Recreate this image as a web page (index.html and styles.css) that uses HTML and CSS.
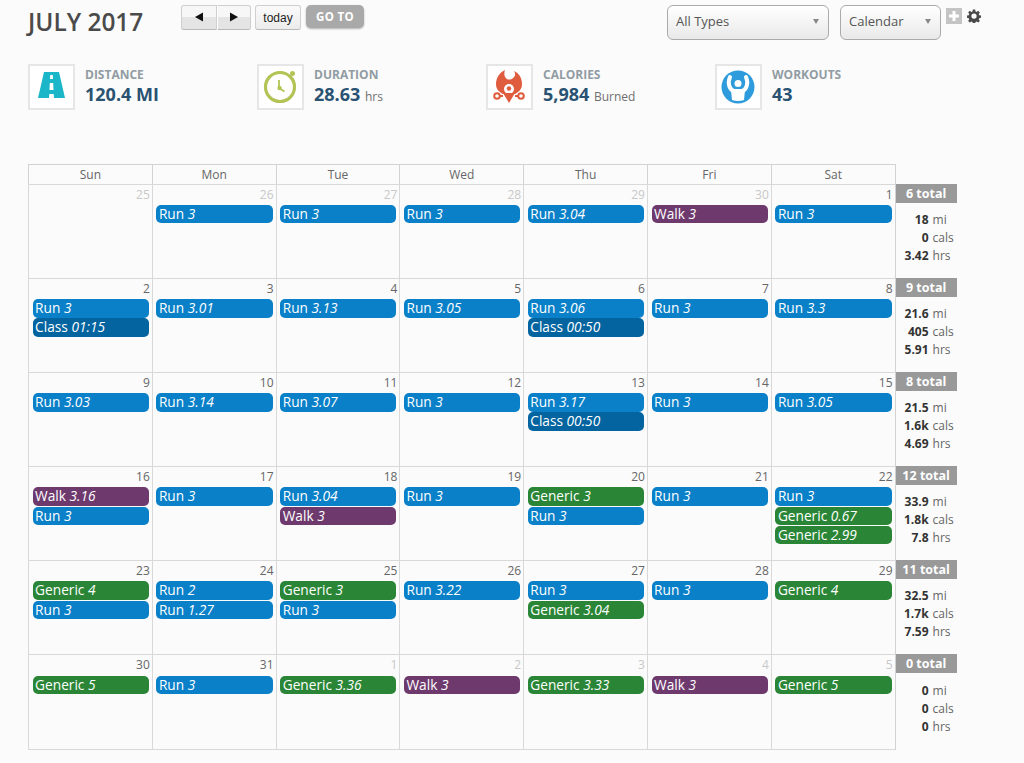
FILE: index.html
```html
<!DOCTYPE html>
<html lang="en">
<head>
<meta charset="utf-8">
<title>July 2017</title>
<link rel="stylesheet" href="styles.css">
</head>
<body>
<header class="topbar">
  <h1 class="month">JULY 2017</h1>
  <div class="nav">
    <button class="fc-btn fc-prev"><svg width="10" height="10" viewBox="0 0 10 10"><polygon points="1,5 9,0.5 9,9.5"/></svg></button>
    <button class="fc-btn fc-next"><svg width="10" height="10" viewBox="0 0 10 10"><polygon points="9,5 1,0.5 1,9.5"/></svg></button>
    <button class="fc-btn fc-today">today</button>
    <button class="goto">GO TO</button>
  </div>
  <div class="filters">
    <div class="select select-types"><span>All Types</span><i class="caret"></i></div>
    <div class="select select-view"><span>Calendar</span><i class="caret"></i></div>
    <div class="plus"><svg width="16" height="16" viewBox="0 0 16 16"><path d="M6.500 3h3v3.500H13v3H9.500V13h-3V9.500H3v-3h3.500z" fill="#fff"/></svg></div>
    <svg class="gear" width="14" height="14" viewBox="0 0 24 24"><path fill="#4a4a4a" fill-rule="evenodd" d="M10 1h4l.6 3.200 1.900.8 2.700-1.800 2.800 2.800-1.800 2.700.8 1.900 3 .6v4l-3 .6-.8 1.900 1.800 2.700-2.800 2.800-2.700-1.800-1.900.8-.6 3.200h-4l-.6-3.200-1.900-.8-2.700 1.800-2.800-2.800 1.800-2.700-.8-1.900-3-.6v-4l3-.6.8-1.900-1.800-2.700 2.800-2.800 2.700 1.800 1.900-.8zM12 7.500a4.500 4.500 0 1 0 0 9 4.500 4.500 0 0 0 0-9z"/></svg>
  </div>
</header>

<section class="stats">
  <div class="stat">
    <div class="stat-icon"><svg width="43" height="42" viewBox="0 0 43 42"><path fill="#1cb6c9" d="M14 6h15l6 26H8z"/><path fill="#fff" d="M20.200 9h2.600l.2 4h-3zM19.800 17h3.400l.3 7h-4zM19.300 28h4.400l.3 4h-5z"/></svg></div>
    <div><div class="stat-label">DISTANCE</div><div class="stat-value">120.4 MI</div></div>
  </div>
  <div class="stat">
    <div class="stat-icon"><svg width="43" height="42" viewBox="0 0 43 42"><circle cx="21" cy="21" r="14.500" fill="#fff" stroke="#b3c355" stroke-width="3.200"/><circle cx="33.500" cy="7.500" r="2.500" fill="#b3c355"/><path d="M20 14v8l5.500 3.500" fill="none" stroke="#b3c355" stroke-width="1.800"/><circle cx="20.500" cy="22" r="2.200" fill="#b3c355"/></svg></div>
    <div><div class="stat-label">DURATION</div><div class="stat-value">28.63 <small>hrs</small></div></div>
  </div>
  <div class="stat">
    <div class="stat-icon"><svg width="43" height="42" viewBox="0 0 43 42"><path fill="#e05c3e" d="M17 4C11 7 8 12 8 18c0 5 3 8 7 10h12c4-2 7-5 7-10 0-6-3-11-8-13 2 3 1 6-1 7-2 2-6 2-7 0-2-2-2-5-1-8z"/><circle cx="21" cy="23" r="5" fill="#fff"/><circle cx="21" cy="22.500" r="2.200" fill="#e05c3e"/><path fill="#e05c3e" d="M15 27h12l-6 10z"/><circle cx="9" cy="30" r="2.800" fill="#fff" stroke="#e05c3e" stroke-width="2"/><circle cx="33" cy="30" r="2.800" fill="#fff" stroke="#e05c3e" stroke-width="2"/><path d="M12 30h3M27 30h3" stroke="#e05c3e" stroke-width="2"/></svg></div>
    <div><div class="stat-label">CALORIES</div><div class="stat-value">5,984 <small>Burned</small></div></div>
  </div>
  <div class="stat">
    <div class="stat-icon"><svg width="43" height="42" viewBox="0 0 43 42"><circle cx="21" cy="21" r="16.500" fill="#2e9cdc"/><path fill="none" stroke="#fff" stroke-width="4" stroke-linecap="round" d="M13 11c-3 7 0 13 4 14h8c4-1 7-7 4-14"/><circle cx="21" cy="17.500" r="3.500" fill="#fff"/><path fill="#fff" d="M14 24h14l-1 10q-6 2-12 0z"/></svg></div>
    <div><div class="stat-label">WORKOUTS</div><div class="stat-value">43</div></div>
  </div>
</section>

<main class="cal">
  <div class="dow">Sun</div><div class="dow">Mon</div><div class="dow">Tue</div><div class="dow">Wed</div><div class="dow">Thu</div><div class="dow">Fri</div><div class="dow">Sat</div><div class="side-head"></div>

  <div class="day"><div class="num off">25</div></div>
  <div class="day"><div class="num off">26</div><div class="ev run">Run <em>3</em></div></div>
  <div class="day"><div class="num off">27</div><div class="ev run">Run <em>3</em></div></div>
  <div class="day"><div class="num off">28</div><div class="ev run">Run <em>3</em></div></div>
  <div class="day"><div class="num off">29</div><div class="ev run">Run <em>3.04</em></div></div>
  <div class="day"><div class="num off">30</div><div class="ev walk">Walk <em>3</em></div></div>
  <div class="day"><div class="num">1</div><div class="ev run">Run <em>3</em></div></div>
  <div class="side"><div class="total">6 total</div><dl class="sums"><dt>18</dt><dd>mi</dd><dt>0</dt><dd>cals</dd><dt>3.42</dt><dd>hrs</dd></dl></div>

  <div class="day"><div class="num">2</div><div class="ev run">Run <em>3</em></div><div class="ev class">Class <em>01:15</em></div></div>
  <div class="day"><div class="num">3</div><div class="ev run">Run <em>3.01</em></div></div>
  <div class="day"><div class="num">4</div><div class="ev run">Run <em>3.13</em></div></div>
  <div class="day"><div class="num">5</div><div class="ev run">Run <em>3.05</em></div></div>
  <div class="day"><div class="num">6</div><div class="ev run">Run <em>3.06</em></div><div class="ev class">Class <em>00:50</em></div></div>
  <div class="day"><div class="num">7</div><div class="ev run">Run <em>3</em></div></div>
  <div class="day"><div class="num">8</div><div class="ev run">Run <em>3.3</em></div></div>
  <div class="side"><div class="total">9 total</div><dl class="sums"><dt>21.6</dt><dd>mi</dd><dt>405</dt><dd>cals</dd><dt>5.91</dt><dd>hrs</dd></dl></div>

  <div class="day"><div class="num">9</div><div class="ev run">Run <em>3.03</em></div></div>
  <div class="day"><div class="num">10</div><div class="ev run">Run <em>3.14</em></div></div>
  <div class="day"><div class="num">11</div><div class="ev run">Run <em>3.07</em></div></div>
  <div class="day"><div class="num">12</div><div class="ev run">Run <em>3</em></div></div>
  <div class="day"><div class="num">13</div><div class="ev run">Run <em>3.17</em></div><div class="ev class">Class <em>00:50</em></div></div>
  <div class="day"><div class="num">14</div><div class="ev run">Run <em>3</em></div></div>
  <div class="day"><div class="num">15</div><div class="ev run">Run <em>3.05</em></div></div>
  <div class="side"><div class="total">8 total</div><dl class="sums"><dt>21.5</dt><dd>mi</dd><dt>1.6k</dt><dd>cals</dd><dt>4.69</dt><dd>hrs</dd></dl></div>

  <div class="day"><div class="num">16</div><div class="ev walk">Walk <em>3.16</em></div><div class="ev run">Run <em>3</em></div></div>
  <div class="day"><div class="num">17</div><div class="ev run">Run <em>3</em></div></div>
  <div class="day"><div class="num">18</div><div class="ev run">Run <em>3.04</em></div><div class="ev walk">Walk <em>3</em></div></div>
  <div class="day"><div class="num">19</div><div class="ev run">Run <em>3</em></div></div>
  <div class="day"><div class="num">20</div><div class="ev gen">Generic <em>3</em></div><div class="ev run">Run <em>3</em></div></div>
  <div class="day"><div class="num">21</div><div class="ev run">Run <em>3</em></div></div>
  <div class="day"><div class="num">22</div><div class="ev run">Run <em>3</em></div><div class="ev gen">Generic <em>0.67</em></div><div class="ev gen">Generic <em>2.99</em></div></div>
  <div class="side"><div class="total">12 total</div><dl class="sums"><dt>33.9</dt><dd>mi</dd><dt>1.8k</dt><dd>cals</dd><dt>7.8</dt><dd>hrs</dd></dl></div>

  <div class="day"><div class="num">23</div><div class="ev gen">Generic <em>4</em></div><div class="ev run">Run <em>3</em></div></div>
  <div class="day"><div class="num">24</div><div class="ev run">Run <em>2</em></div><div class="ev run">Run <em>1.27</em></div></div>
  <div class="day"><div class="num">25</div><div class="ev gen">Generic <em>3</em></div><div class="ev run">Run <em>3</em></div></div>
  <div class="day"><div class="num">26</div><div class="ev run">Run <em>3.22</em></div></div>
  <div class="day"><div class="num">27</div><div class="ev run">Run <em>3</em></div><div class="ev gen">Generic <em>3.04</em></div></div>
  <div class="day"><div class="num">28</div><div class="ev run">Run <em>3</em></div></div>
  <div class="day"><div class="num">29</div><div class="ev gen">Generic <em>4</em></div></div>
  <div class="side"><div class="total">11 total</div><dl class="sums"><dt>32.5</dt><dd>mi</dd><dt>1.7k</dt><dd>cals</dd><dt>7.59</dt><dd>hrs</dd></dl></div>

  <div class="day last"><div class="num">30</div><div class="ev gen">Generic <em>5</em></div></div>
  <div class="day last"><div class="num">31</div><div class="ev run">Run <em>3</em></div></div>
  <div class="day last"><div class="num off">1</div><div class="ev gen">Generic <em>3.36</em></div></div>
  <div class="day last"><div class="num off">2</div><div class="ev walk">Walk <em>3</em></div></div>
  <div class="day last"><div class="num off">3</div><div class="ev gen">Generic <em>3.33</em></div></div>
  <div class="day last"><div class="num off">4</div><div class="ev walk">Walk <em>3</em></div></div>
  <div class="day last"><div class="num off">5</div><div class="ev gen">Generic <em>5</em></div></div>
  <div class="side"><div class="total">0 total</div><dl class="sums"><dt>0</dt><dd>mi</dd><dt>0</dt><dd>cals</dd><dt>0</dt><dd>hrs</dd></dl></div>
</main>
</body>
</html>
```
FILE: styles.css
```css
* { box-sizing: border-box; }
html, body { margin: 0; padding: 0; }
body {
  width: 1024px;
  height: 763px;
  overflow: hidden;
  background: #fbfbfb;
  color: #555;
  font-family: "Open Sans", sans-serif;
}

.topbar {
  display: flex;
  align-items: flex-start;
  height: 64px;
  padding: 5px 0 0 28px;
}
.month {
  width: 153px;
  margin: 0;
  font-size: 24.400px;
  line-height: 34px;
  font-weight: 600;
  color: #4a4a4a;
  white-space: nowrap;
}
.nav { display: flex; align-items: flex-start; width: 183px; }
.fc-btn {
  height: 25px;
  padding: 0;
  border: 1px solid #cfcfcf;
  border-bottom-color: #b8b8b8;
  background: linear-gradient(#f7f7f7 0 50%, #e4e4e4 50% 100%);
  display: flex;
  align-items: center;
  justify-content: center;
}
.fc-prev { width: 36px; border-radius: 3px 0 0 3px; }
.fc-next { width: 34px; border-left: 1px solid #fff; border-radius: 0 3px 3px 0; margin-right: 4px; }
.fc-prev svg, .fc-next svg { fill: #111; margin-bottom: 2px; }
.fc-today {
  width: 46px;
  border-radius: 3px;
  background: linear-gradient(#fafafa, #ececec);
  font-family: "Liberation Sans", sans-serif;
  font-size: 12px;
  color: #222;
  margin-right: 5px;
}
.goto {
  width: 58px;
  height: 23px;
  padding: 0;
  border: 0;
  border-radius: 5px;
  background: #a9a9a9;
  box-shadow: 0 1px 2px rgba(0,0,0,.3);
  color: #fff;
  font-family: "Open Sans", sans-serif;
  font-size: 11.500px;
  font-weight: 700;
  letter-spacing: .3px;
}
.filters { display: flex; align-items: flex-start; margin-left: 303px; }
.select {
  display: flex;
  align-items: center;
  justify-content: space-between;
  height: 35px;
  padding: 0 9px 3px 8px;
  border: 1px solid #aaa;
  border-radius: 6px;
  background: linear-gradient(#fff, #e9e9e9);
  font-size: 13px;
  color: #555;
}
.select-types { width: 162px; margin-right: 11px; }
.select-view { width: 101px; margin-right: 5px; }
.caret {
  width: 0;
  height: 0;
  border-left: 3.500px solid transparent;
  border-right: 3.500px solid transparent;
  border-top: 5px solid #888;
}
.plus { width: 16px; height: 16px; margin: 3px 5px 0 0; background: #c4c4c4; }
.plus svg { display: block; }
.gear { margin-top: 4px; }

.stats { display: flex; height: 46px; margin: 0 0 54px 28px; }
.stat { display: flex; width: 229px; }
.stat-icon {
  width: 47px;
  height: 46px;
  margin-right: 10px;
  border: 2px solid #e6e6e6;
  background: #fff;
}
.stat-icon svg { display: block; margin: 0; }
.stat-label {
  margin-top: 3px;
  font-size: 12px;
  line-height: 15px;
  font-weight: 700;
  color: #919ca3;
}
.stat-value {
  font-size: 18px;
  line-height: 24px;
  font-weight: 700;
  color: #2a5272;
  white-space: nowrap;
}
.stat-value small { font-size: 12px; font-weight: 400; color: #6f6f6f; }

.cal {
  display: grid;
  grid-template-columns: repeat(7, 1fr) 62px;
  grid-template-rows: 20px repeat(5, 94.100px) 95.500px;
  width: 928.600px;
  margin-left: 28px;
}
.dow {
  border: 1px solid #d2d2d2;
  border-width: 1px 0 0 1px;
  text-align: center;
  font-size: 12px;
  line-height: 19px;
  color: #666;
}
.side-head { border-left: 1px solid #d2d2d2; }
.day {
  min-width: 0;
  padding: 0 3px 0 3.600px;
  border: 1px solid #d9d9d9;
  border-width: 1px 0 0 1px;
}
.day.last { border-bottom-width: 1px; }
.num {
  height: 19.300px;
  margin-right: -1px;
  text-align: right;
  font-size: 12px;
  line-height: 19px;
  color: #666;
}
.num.off { color: #c8c8c8; }
.ev {
  height: 18.400px;
  margin-top: .8px;
  padding-left: 2.500px;
  border-radius: 5px;
  color: #fff;
  font-size: 13.700px;
  line-height: 18px;
  white-space: nowrap;
  overflow: hidden;
}
.ev em { font-style: italic; }
.run { background: #0a80c8; }
.class { background: #04649f; }
.walk { background: #6e3a6e; }
.gen { background: #2a8636; }

.side { border-left: 1px solid #d2d2d2; }
.total {
  width: 61px;
  height: 19px;
  background: #999;
  color: #fff;
  text-align: center;
  font-size: 12.500px;
  line-height: 19px;
  font-weight: 700;
}
.sums {
  display: grid;
  grid-template-columns: 33px 1fr;
  column-gap: 4px;
  margin: 8.100px 0 0;
  font-size: 12px;
  line-height: 18px;
}
.sums dt { text-align: right; font-weight: 700; color: #333; }
.sums dd { margin: 0; color: #666; }
```
